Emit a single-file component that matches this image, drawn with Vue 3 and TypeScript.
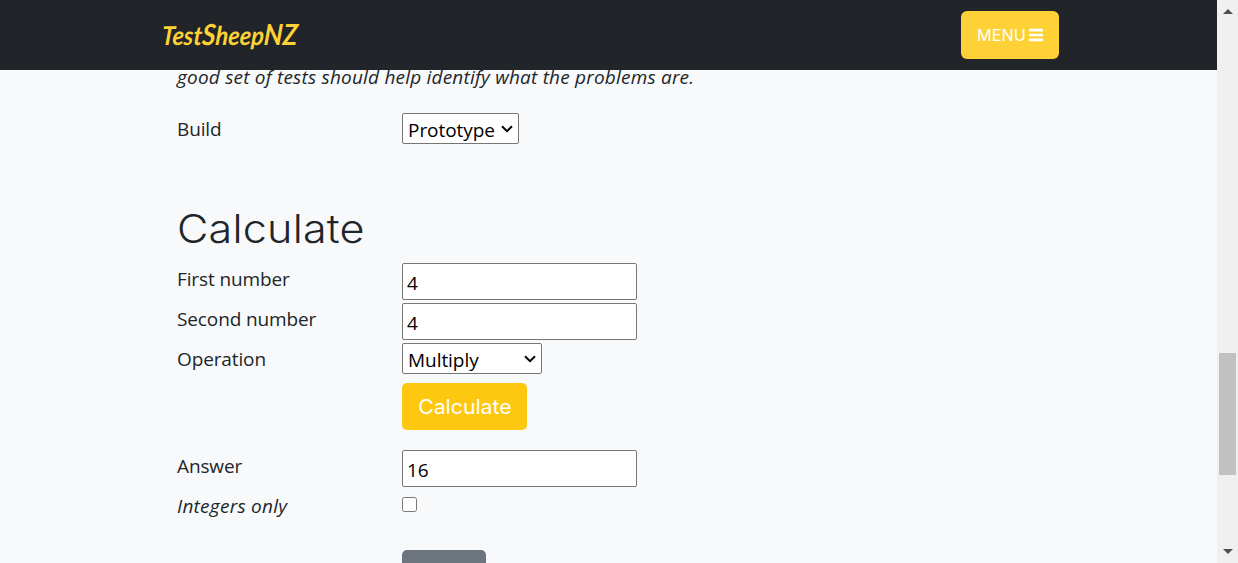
<script setup lang="ts">
import { ref } from 'vue'

const build = ref('Prototype')
const first = ref('4')
const second = ref('4')
const operation = ref('Multiply')
const answer = ref('16')
const integersOnly = ref(false)

const builds = ['Prototype']
const operations = ['Add', 'Subtract', 'Multiply', 'Divide']

function calculate() {
  const a = Number(first.value)
  const b = Number(second.value)
  const results: Record<string, number> = { Add: a + b, Subtract: a - b, Multiply: a * b, Divide: a / b }
  const value = results[operation.value]
  answer.value = String(integersOnly.value ? Math.trunc(value) : value)
}

function clearAnswer() {
  answer.value = ''
}
</script>

<template>
  <div class="window">
    <div class="page">
      <header class="navbar">
        <a class="brand"><span>Test<b>S</b>heep<b>NZ</b></span></a>
        <button class="menu" type="button">
          <span>MENU</span>
          <svg width="14" height="14" viewBox="0 0 14 14" fill="#fff">
            <rect y="0.8" width="14" height="2.6" rx="0.4" />
            <rect y="5.7" width="14" height="2.6" rx="0.4" />
            <rect y="10.6" width="14" height="2.6" rx="0.4" />
          </svg>
        </button>
      </header>
      <main class="content">
        <p class="intro"><span>good set of tests should help identify what the problems are.</span></p>
        <div class="row">
          <label>Build</label>
          <div class="picker build">
            <select v-model="build">
              <option v-for="b in builds" :key="b">{{ b }}</option>
            </select>
            <svg class="chevron" width="12" height="8" viewBox="0 0 12 8"><path d="M1 1.3L6 6.2L11 1.3" fill="none" stroke="#000" stroke-width="2" /></svg>
          </div>
        </div>
        <h1><span>Calculate</span></h1>
        <form @submit.prevent="calculate">
          <div class="row">
            <label>First number</label>
            <input v-model="first" class="field" type="text" />
          </div>
          <div class="row">
            <label>Second number</label>
            <input v-model="second" class="field" type="text" />
          </div>
          <div class="row">
            <label>Operation</label>
            <div class="picker operation">
              <select v-model="operation">
                <option v-for="o in operations" :key="o">{{ o }}</option>
              </select>
              <svg class="chevron" width="12" height="8" viewBox="0 0 12 8"><path d="M1 1.3L6 6.2L11 1.3" fill="none" stroke="#000" stroke-width="2" /></svg>
            </div>
          </div>
          <div class="row submit-row">
            <button class="calculate" type="submit"><span>Calculate</span></button>
          </div>
          <div class="row">
            <label>Answer</label>
            <input v-model="answer" class="field" type="text" />
          </div>
          <div class="row">
            <label class="italic">Integers only</label>
            <input v-model="integersOnly" class="check" type="checkbox" />
          </div>
          <div class="row clear-row">
            <button class="clear" type="button" aria-label="Clear" @click="clearAnswer"></button>
          </div>
        </form>
      </main>
    </div>
    <div class="scrollbar">
      <svg width="10" height="5" viewBox="0 0 10 5"><path d="M0 5L5 0L10 5Z" fill="#505050" /></svg>
      <div class="thumb"></div>
      <svg class="down" width="10" height="5" viewBox="0 0 10 5"><path d="M0 0L5 5L10 0Z" fill="#505050" /></svg>
    </div>
  </div>
</template>

<style>
body {
  margin: 0;
  overflow: hidden;
}
</style>

<style scoped>
* {
  box-sizing: border-box;
}
.window {
  display: flex;
  width: 1238px;
  height: 563px;
  overflow: hidden;
  color: #212529;
  font: 400 19px/30px "Open Sans", "Noto Sans", sans-serif;
}
.page {
  width: 1217px;
  height: 563px;
  overflow: hidden;
  background: #f8f9fb;
}
.navbar {
  display: flex;
  justify-content: space-between;
  align-items: center;
  height: 70px;
  padding: 0 158px 0 162px;
  background: #212529;
}
.brand {
  color: #fed136;
  font: italic 700 26px/40px Lato, sans-serif;
}
.brand span {
  display: inline-block;
  transform: skewX(-4deg) scaleX(0.905);
  transform-origin: left;
  white-space: nowrap;
}
.brand b {
  font-size: 29px;
  line-height: 1;
  font-weight: 700;
}
.menu {
  display: flex;
  align-items: center;
  gap: 4px;
  width: 98px;
  height: 48px;
  padding: 0 16px;
  border: 0;
  border-radius: 6px;
  background: #fed136;
  color: #fff;
  font: 400 15.5px/24px Inter, sans-serif;
}
.menu span {
  width: 48px;
  padding-top: 1px;
  text-align: left;
  white-space: nowrap;
  transform: scaleX(1.05);
  transform-origin: left;
}
.content {
  display: flow-root;
  padding-left: 177px;
}
.intro {
  display: flow-root;
  height: 43px;
  margin: 0;
  font-style: italic;
  letter-spacing: 0.2px;
  white-space: nowrap;
}
.intro span {
  display: block;
  margin-top: -8px;
}
.row {
  display: grid;
  grid-template-columns: 225px 1fr;
  align-items: start;
  height: 40px;
}
label {
  margin-top: 1px;
  letter-spacing: -0.12px;
  white-space: nowrap;
}
.italic {
  font-style: italic;
  letter-spacing: 0.25px;
}
h1 {
  display: flow-root;
  height: 50px;
  margin: 60px 0 0;
  font: 300 39px/50px Inter, sans-serif;
  letter-spacing: 0.2px;
}
h1 span {
  display: block;
  margin-top: -9px;
  transform: scaleX(1.105);
  transform-origin: left;
}
select,
.field {
  margin: 0;
  border: 1px solid #767676;
  border-radius: 2px;
  background: #fff;
  color: #000;
  font: inherit;
  line-height: normal;
}
.picker {
  position: relative;
  height: 31px;
}
select {
  display: block;
  width: 100%;
  height: 31px;
  padding: 2px 0 0 5px;
  appearance: none;
  letter-spacing: -0.05px;
}
.chevron {
  position: absolute;
  top: 12px;
  right: 6px;
  pointer-events: none;
}
.build {
  width: 117px;
}
.operation {
  width: 140px;
}
.field {
  width: 235px;
  height: 37px;
  padding: 2px 4px 0;
}
.submit-row {
  height: 67px;
}
.calculate {
  grid-column: 2;
  width: 125px;
  height: 47px;
  padding: 0;
  border: 0;
  border-radius: 5px;
  background: #ffc810;
  color: #fff;
  font: 400 19.5px/30px Inter, sans-serif;
}
.calculate span {
  display: inline-block;
  transform: scaleX(1.09);
}
.check {
  width: 15px;
  height: 15px;
  margin: 7px 0 0;
}
.clear-row {
  padding-top: 20px;
}
.clear {
  grid-column: 2;
  width: 84px;
  height: 47px;
  border: 0;
  border-radius: 5px;
  background: #6c757d;
}
.scrollbar {
  display: flex;
  flex-direction: column;
  align-items: center;
  width: 21px;
  height: 563px;
  padding: 9px 0;
  background: #f0f0f0;
}
.thumb {
  flex: none;
  width: 17px;
  height: 122px;
  margin-top: 339px;
  background: #c1c1c1;
}
.down {
  margin-top: auto;
}
</style>
